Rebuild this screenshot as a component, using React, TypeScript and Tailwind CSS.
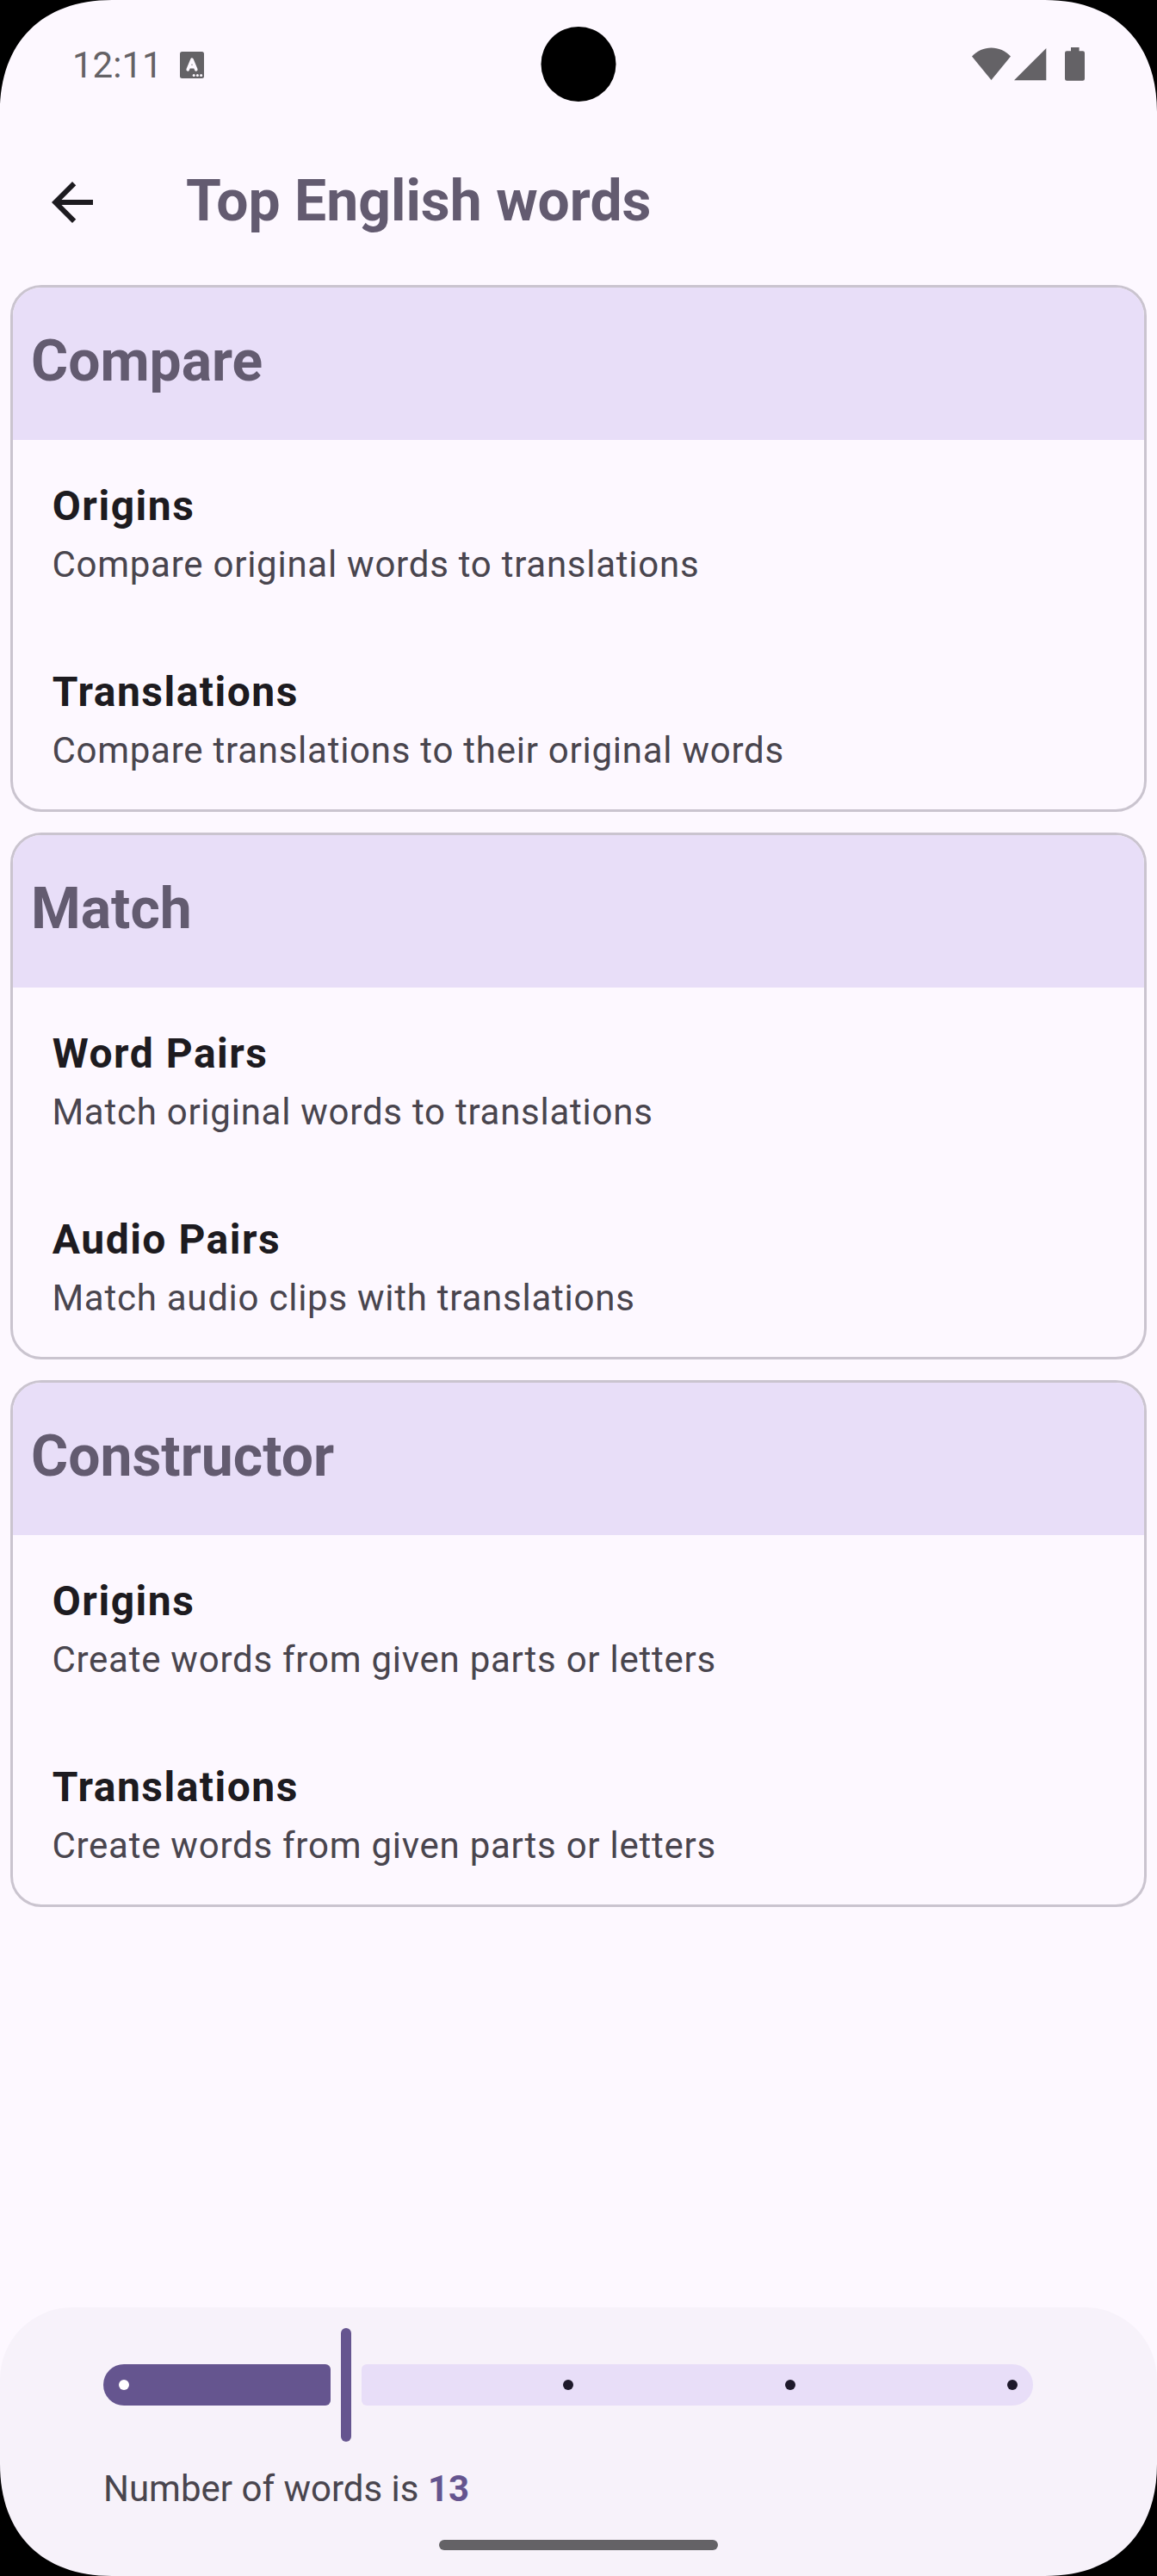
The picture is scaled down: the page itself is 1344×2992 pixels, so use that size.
type Item = { title: string; text: string };
type Section = { name: string; items: Item[] };

const sections: Section[] = [
  {
    name: 'Compare',
    items: [
      { title: 'Origins', text: 'Compare original words to translations' },
      { title: 'Translations', text: 'Compare translations to their original words' },
    ],
  },
  {
    name: 'Match',
    items: [
      { title: 'Word Pairs', text: 'Match original words to translations' },
      { title: 'Audio Pairs', text: 'Match audio clips with translations' },
    ],
  },
  {
    name: 'Constructor',
    items: [
      { title: 'Origins', text: 'Create words from given parts or letters' },
      { title: 'Translations', text: 'Create words from given parts or letters' },
    ],
  },
];

function StatusBar() {
  return (
    <div className="relative flex h-[156px] shrink-0 items-start justify-between pt-[51px] pl-[84px] pr-[84px] text-[#646266]">
      <div className="flex items-start">
        <span className="w-[104px] text-[42px] leading-[50px] whitespace-nowrap">12:11</span>
        <svg className="mt-[9px] ml-[21px]" width="28" height="31" viewBox="0 0 28 31">
          <rect width="28" height="31" rx="2.5" fill="currentColor" />
          <path d="M9.2 20.8 14 9.2 18.8 20.8M10.7 17.6H17.3" fill="none" stroke="#fdf8ff" strokeWidth="3.6" strokeLinecap="round" strokeLinejoin="round" />
          <circle cx="16.2" cy="27.5" r="1.5" fill="#fdf8ff" />
          <circle cx="20.4" cy="27.5" r="1.5" fill="#fdf8ff" />
          <circle cx="24.6" cy="27.5" r="1.5" fill="#fdf8ff" />
        </svg>
      </div>
      <div className="absolute left-1/2 top-[31px] size-[87px] -translate-x-1/2 rounded-full bg-black" />
      <svg className="mt-[4px]" width="131" height="39" viewBox="0 0 131 39" fill="currentColor">
        <path d="M0 10.6C6 4 14 .5 22.5 .5S39 4 45 10.6L22.5 38Z" />
        <path d="M49 38.3 86.3 1V38.3Z" />
        <path d="M115 0h9.6v4.2h4.2a2.2 2.2 0 0 1 2.2 2.2v30a2.4 2.4 0 0 1-2.4 2.4h-18.2a2.4 2.4 0 0 1-2.4-2.4v-30a2.2 2.2 0 0 1 2.2-2.2h4.8Z" />
      </svg>
    </div>
  );
}

function TopBar() {
  return (
    <header className="flex h-[175px] shrink-0 items-start pl-[48px]">
      <button className="mt-[43px] size-[72px] text-[#1d1b20]" aria-label="Back">
        <svg className="size-[72px]" viewBox="0 0 24 24" fill="currentColor">
          <path d="M20 11H7.83l5.59-5.59L12 4l-8 8 8 8 1.41-1.41L7.83 13H20v-2z" />
        </svg>
      </button>
      <h1 className="mt-[36px] ml-[96px] text-[66px] leading-[84px] font-bold text-[#635b70]">Top English words</h1>
    </header>
  );
}

function Card({ section }: { section: Section }) {
  return (
    <section className="h-[612px] overflow-hidden rounded-[36px] border-[3px] border-[#cac4cf]">
      <h2 className="h-[177px] bg-[#e8def8] pt-[44px] pl-[21px] text-[66px] leading-[84px] font-bold text-[#635b70]">
        {section.name}
      </h2>
      {section.items.map((item) => (
        <div key={item.title} className="h-[216px] pt-[41px] pl-[45px]">
          <div className="pl-[0.75px] text-[48px] leading-[72px] font-bold tracking-[1.5px] text-[#1d1b20]">{item.title}</div>
          <div className="mt-[2px] pl-[0.4px] text-[42px] leading-[60px] tracking-[0.75px] text-[#49454e]">{item.text}</div>
        </div>
      ))}
    </section>
  );
}

function Slider() {
  return (
    <div className="flex h-[132px] items-center gap-[12px]">
      <div className="flex h-[48px] w-[264px] items-center rounded-l-[24px] rounded-r-[6px] bg-[#65558f] pl-[18px]">
        <span className="size-[12px] rounded-full bg-white" />
      </div>
      <div className="h-[132px] w-[12px] rounded-full bg-[#65558f]" />
      <div className="flex h-[48px] w-[780px] items-center justify-between rounded-l-[6px] rounded-r-[24px] bg-[#e8def8] pr-[18px] pl-[234px]">
        <span className="size-[12px] rounded-full bg-[#1e192b]" />
        <span className="size-[12px] rounded-full bg-[#1e192b]" />
        <span className="size-[12px] rounded-full bg-[#1e192b]" />
      </div>
    </div>
  );
}

/* Black display corner, drawn for the top left and flipped for the others. */
function Corner({ place }: { place: string }) {
  return (
    <svg className={`absolute ${place}`} width="130" height="130" viewBox="0 0 130 130">
      <path d="M0 0H130C49 0 0 49 0 130Z" fill="#000" />
    </svg>
  );
}

export default function App() {
  return (
    <div className="relative flex h-[2992px] w-[1344px] flex-col overflow-hidden bg-[#fdf8ff] font-[Roboto,sans-serif]">
      <StatusBar />
      <TopBar />
      <main className="flex flex-1 flex-col gap-[24px] px-[12px]">
        {sections.map((s) => (
          <Card key={s.name} section={s} />
        ))}
      </main>
      <footer className="flex h-[312px] shrink-0 flex-col rounded-t-[84px] bg-[#f7f2fa] px-[120px] pt-[24px]">
        <Slider />
        <p className="mt-[25px] text-[42px] leading-[60px] text-[#49454e]">
          Number of words is <b className="font-bold text-[#65558f]">13</b>
        </p>
        <div className="mt-[29px] h-[12px] w-[324px] self-center rounded-full bg-[#646266]" />
      </footer>
      <Corner place="top-0 left-0" />
      <Corner place="top-0 right-0 -scale-x-100" />
      <Corner place="bottom-0 left-0 -scale-y-100" />
      <Corner place="bottom-0 right-0 -scale-100" />
    </div>
  );
}
